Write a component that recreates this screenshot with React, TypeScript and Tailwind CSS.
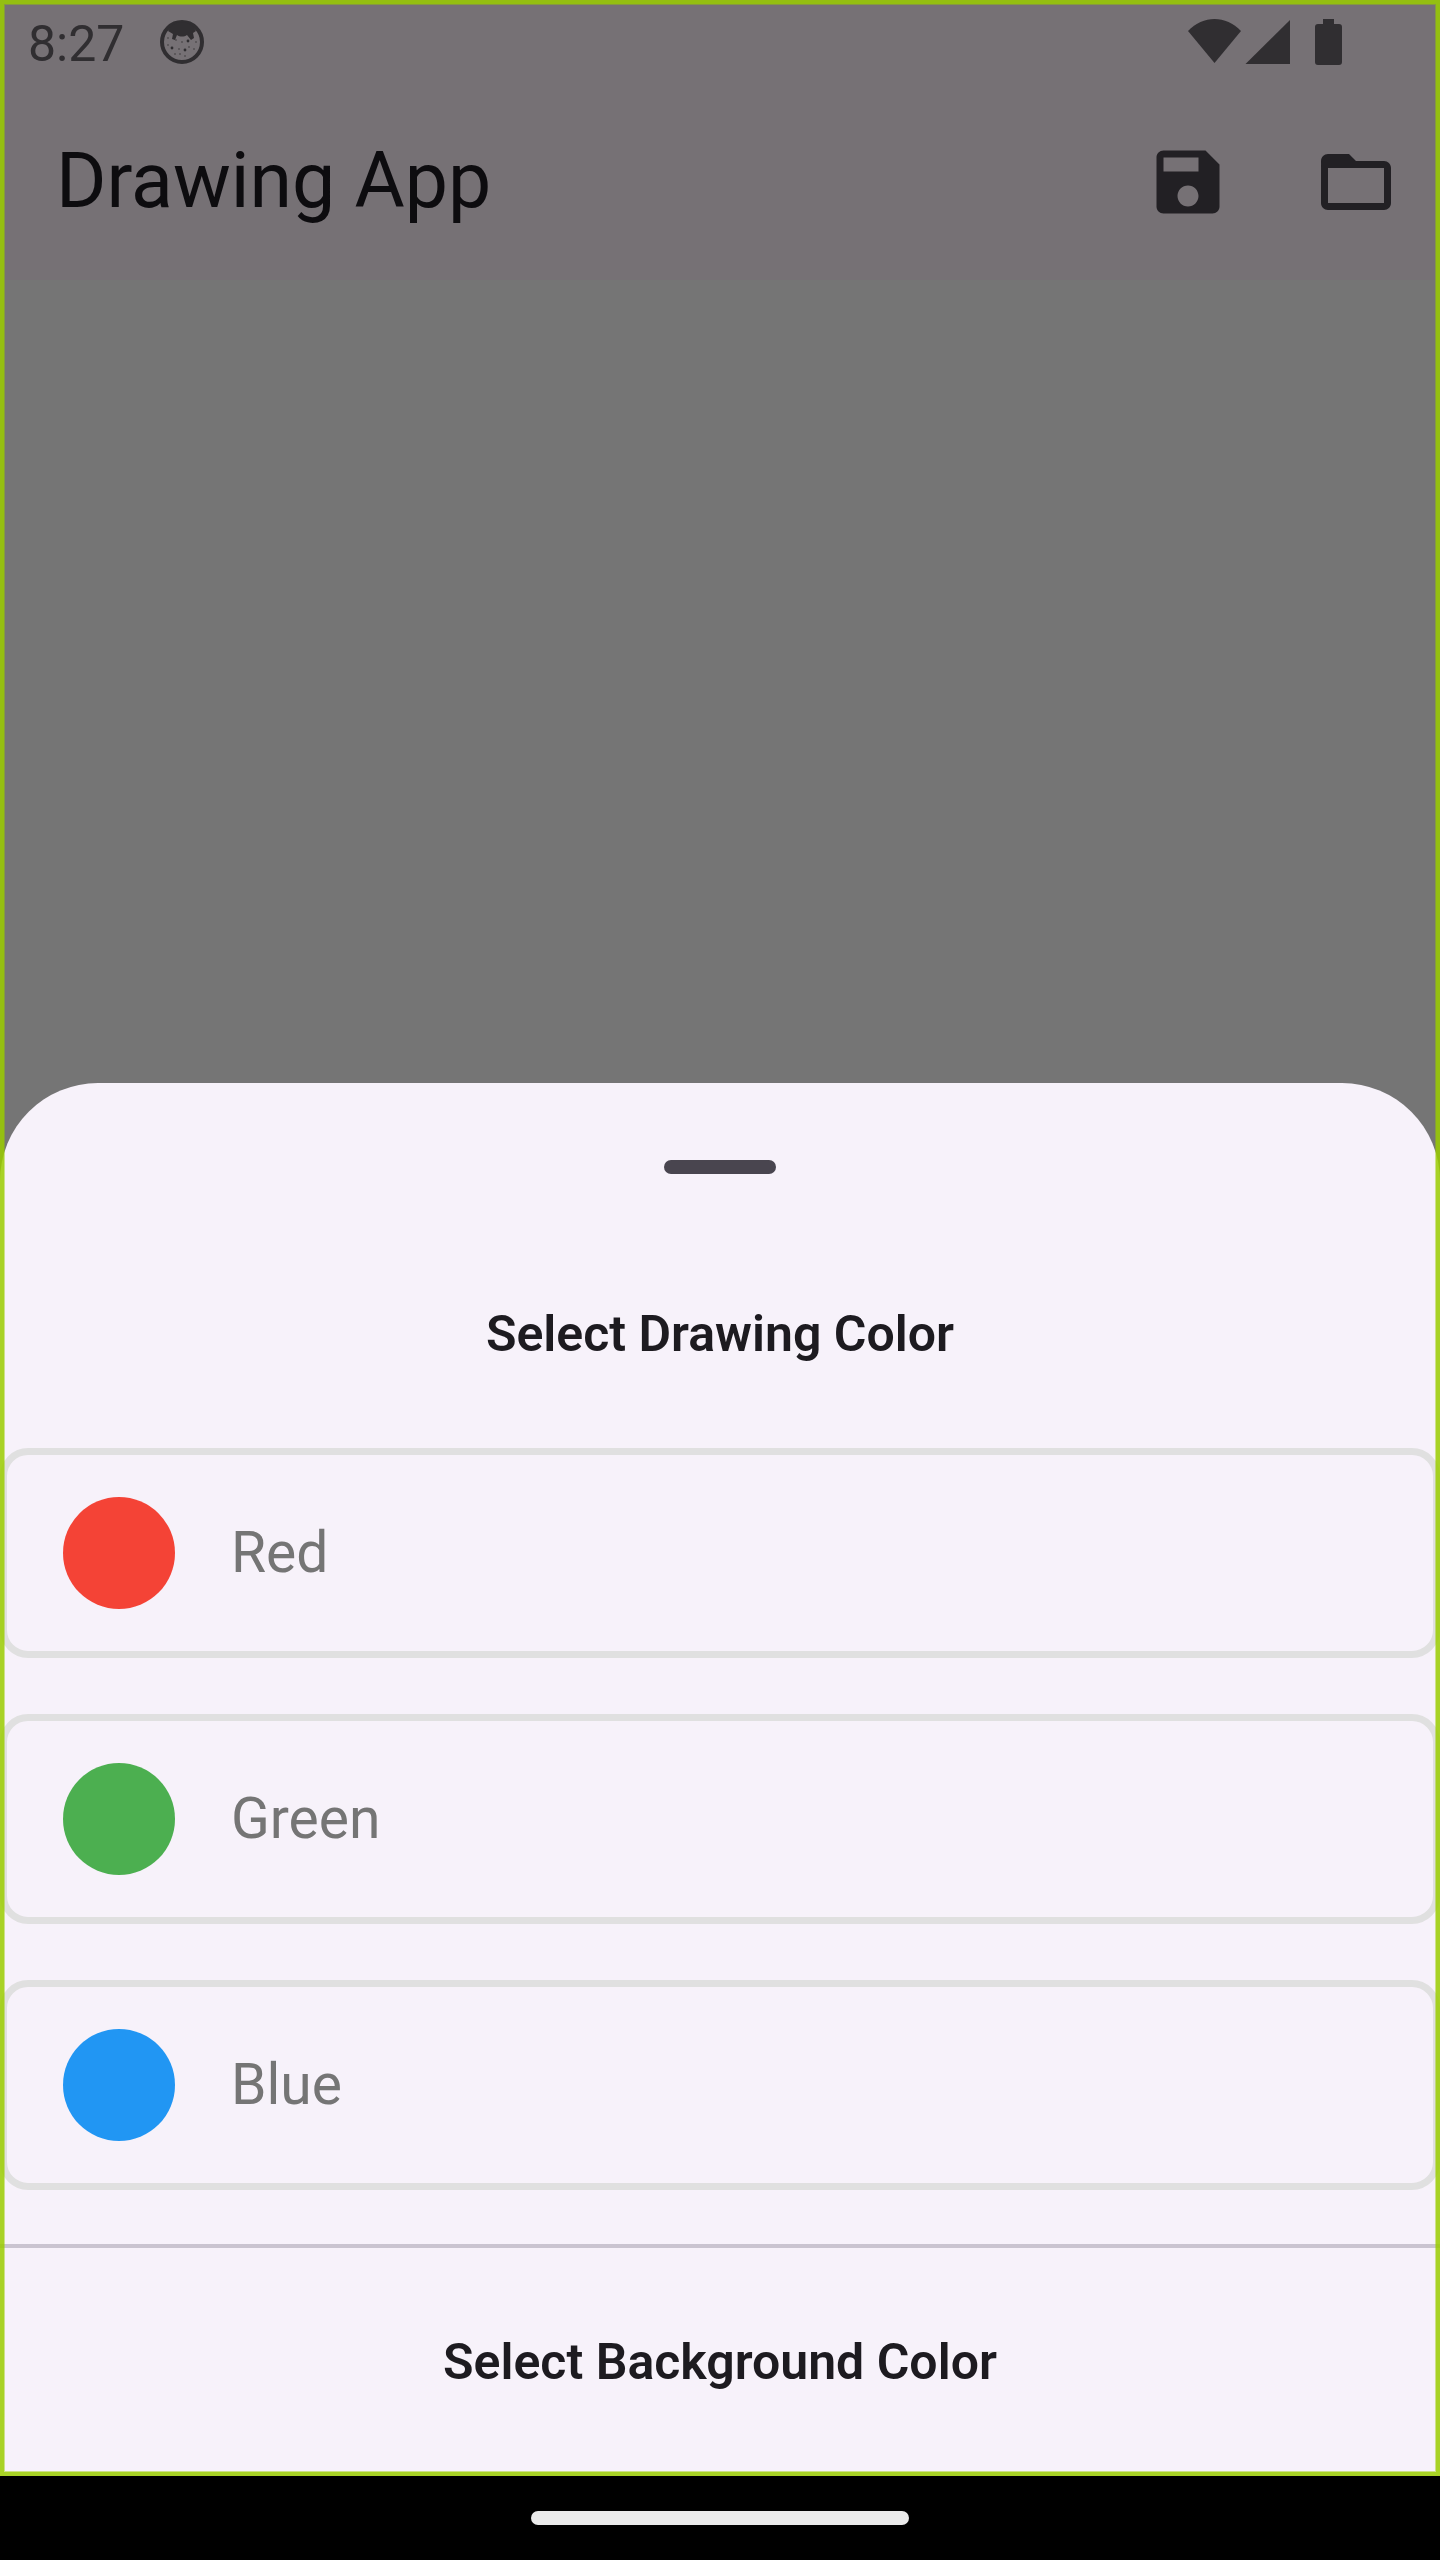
const swatches = [
  { name: 'Red', dot: 'bg-[#f44336]' },
  { name: 'Green', dot: 'bg-[#4caf50]' },
  { name: 'Blue', dot: 'bg-[#2196f3]' },
];

const freckles = [
  [8, 18, 1], [8, 25, 1], [12, 28, 2], [16, 20, 1], [19, 29, 1], [22, 22, 1],
  [28, 21, 2], [25, 30, 2], [29, 27, 1], [34, 29, 1], [36, 22, 1], [15, 34, 1],
  [20, 34, 1], [25, 36, 1],
];

function DebugFaceIcon() {
  return (
    <svg viewBox="0 0 44 44" className="size-11" aria-hidden="true">
      <circle cx="22" cy="22" r="20" fill="none" stroke="#302e31" strokeWidth="4" />
      <path
        d="M8 11C11 5 16 2 22 2s11 3 14 9l-3 2 1 5-3 2-4-5c-3 2-7 2-10 0l-2 5-3-1 1-5z"
        fill="#302e31"
      />
      {freckles.map(([x, y, r]) => (
        <circle key={`${x}-${y}`} cx={x} cy={y} r={r * 0.7} fill="#302e31" />
      ))}
    </svg>
  );
}

function StatusBar() {
  return (
    <div className="flex h-[84px] items-center justify-between pr-[98px] pl-7">
      <div className="flex items-center gap-9">
        <span className="pt-1 text-[50px] leading-[64px] text-[#302e31]">8:27</span>
        <DebugFaceIcon />
      </div>
      <svg viewBox="0 0 154 46" className="h-[46px] w-[154px]" fill="#302e31" aria-hidden="true">
        <path d="M0 12C15-4 38-4 53 12L26.500 44z" />
        <path d="M102 1V45H57.500z" />
        <path d="M135 0h11v5h5a3 3 0 0 1 3 3v35a3 3 0 0 1-3 3h-21a3 3 0 0 1-3-3V8a3 3 0 0 1 3-3h5z" />
      </svg>
    </div>
  );
}

function AppBar() {
  return (
    <div className="flex h-[196px] items-center justify-between pl-14">
      <h1 className="pb-[2px] text-[77px] leading-[98px] text-[#0d0c0f]">Drawing App</h1>
      <div className="flex">
        <button type="button" aria-label="Save" className="flex size-[168px] items-center justify-center">
          <svg viewBox="0 0 24 24" className="size-[84px]" fill="#222024" aria-hidden="true">
            <path d="M17 3H5c-1.110 0-2 .9-2 2v14c0 1.100.89 2 2 2h14c1.100 0 2-.9 2-2V7l-4-4zm-5 16c-1.660 0-3-1.340-3-3s1.340-3 3-3 3 1.340 3 3-1.340 3-3 3zm3-10H5V5h10v4z" />
          </svg>
        </button>
        <button type="button" aria-label="Open" className="flex size-[168px] items-center justify-center">
          <svg viewBox="0 0 24 24" className="size-[84px]" fill="#222024" aria-hidden="true">
            <path d="M20 6h-8l-2-2H4c-1.100 0-1.990.9-1.990 2L2 18c0 1.100.9 2 2 2h16c1.100 0 2-.9 2-2V8c0-1.100-.9-2-2-2zm0 12H4V8h16v10z" />
          </svg>
        </button>
      </div>
    </div>
  );
}

function SheetHeading({ children }: { children: string }) {
  return (
    <h2 className="py-[82px] text-center text-[50px] leading-[64px] font-semibold text-[#1d1b20]">
      {children}
    </h2>
  );
}

function ColorSheet() {
  return (
    <section aria-label="Colors" className="rounded-t-[98px] bg-[#f7f2fa]">
      <div className="flex justify-center pt-[77px] pb-[46px]">
        <div className="h-[14px] w-28 rounded-full bg-[#49454f]" />
      </div>
      <SheetHeading>Select Drawing Color</SheetHeading>
      <div className="flex flex-col gap-14">
        {swatches.map((swatch) => (
          <button
            key={swatch.name}
            type="button"
            className="flex h-[210px] w-full items-center gap-14 rounded-[28px] border-[7px] border-[#e0e0e0] px-14 text-left"
          >
            <span className={`size-28 rounded-full ${swatch.dot}`} />
            <span className="text-[57px] leading-[84px] text-[#757575]">{swatch.name}</span>
          </button>
        ))}
      </div>
      <hr className="mt-[54px] border-t-4 border-[#cac4d0]" />
      <SheetHeading>Select Background Color</SheetHeading>
    </section>
  );
}

export default function App() {
  return (
    <div className="flex min-h-screen flex-col bg-black font-[Roboto,sans-serif]">
      <div className="relative flex flex-1 flex-col bg-[#757575]">
        <header className="bg-[#767175]">
          <StatusBar />
          <AppBar />
        </header>
        <main className="flex flex-1 flex-col justify-end">
          <ColorSheet />
        </main>
        <div className="pointer-events-none absolute inset-0 border-4 border-[#9acc00]/85 shadow-[inset_0_0_0_1px_rgba(154,204,0,0.45)]" />
      </div>
      <nav aria-label="System navigation" className="flex h-[84px] items-center justify-center">
        <div className="h-[14px] w-[378px] rounded-full bg-[#ebebeb]" />
      </nav>
    </div>
  );
}
